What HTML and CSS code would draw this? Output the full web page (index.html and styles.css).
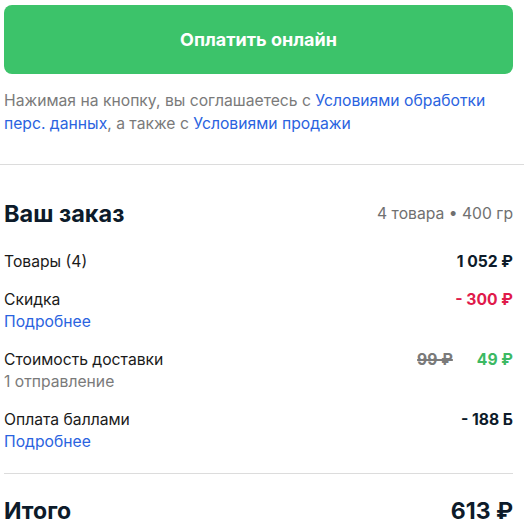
FILE: index.html
```html
<!DOCTYPE html>
<html lang="ru">
<head>
<meta charset="utf-8">
<link rel="stylesheet" href="styles.css">
</head>
<body>
<div class="pay">
  <button class="pay-btn">Оплатить онлайн</button>
  <p class="note">Нажимая на кнопку, вы соглашаетесь с <a class="link">Условиями обработки перс. данных</a>, а также с <a class="link">Условиями продажи</a></p>
</div>
<div class="divider"></div>
<div class="order">
  <div class="order-head">
    <h2 class="title">Ваш заказ</h2>
    <span class="meta">4 товара • 400 гр</span>
  </div>
  <div class="rows">
    <div class="row">
      <div class="label"><div>Товары (4)</div></div>
      <div class="value">1 052 ₽</div>
    </div>
    <div class="row">
      <div class="label"><div>Скидка</div><a class="link">Подробнее</a></div>
      <div class="value red">- 300 ₽</div>
    </div>
    <div class="row">
      <div class="label"><div>Стоимость доставки</div><div class="sub">1 отправление</div></div>
      <div class="value"><s class="old">99 ₽</s><span class="green">49 ₽</span></div>
    </div>
    <div class="row">
      <div class="label"><div>Оплата баллами</div><a class="link">Подробнее</a></div>
      <div class="value">- 188 Б</div>
    </div>
  </div>
  <div class="line"></div>
  <div class="total">
    <span>Итого</span>
    <span>613 ₽</span>
  </div>
</div>
</body>
</html>
```
FILE: styles.css
```css
html, body {
  margin: 0;
  padding: 0;
  background: #fff;
}
body {
  font-family: Inter, "Noto Sans", sans-serif;
  color: #101c2c;
  width: 524px;
  overflow: hidden;
}
.pay {
  padding: 5px 11px 0 4px;
}
.pay-btn {
  display: block;
  width: 100%;
  height: 69px;
  border: 0;
  border-radius: 8px;
  background: #3cc36a;
  color: #fff;
  font-family: inherit;
  font-size: 18px;
  font-weight: 700;
}
.note {
  margin: 15px 0 0;
  font-size: 15.7px;
  line-height: 23px;
  color: #7a7a7a;
}
.link {
  color: #2a63e0;
  text-decoration: none;
}
.divider {
  height: 1px;
  background: #dcdcdc;
  margin-top: 29px;
}
.order {
  padding: 0 11px 0 4px;
}
.order-head {
  display: flex;
  justify-content: space-between;
  align-items: center;
  margin-top: 34px;
  height: 28px;
}
.title {
  margin: 0;
  font-size: 23.5px;
  font-weight: 700;
  color: #0d1b2a;
}
.meta {
  font-size: 15.7px;
  color: #707070;
}
.rows {
  display: flex;
  flex-direction: column;
  gap: 16px;
  margin-top: 24px;
}
.row {
  display: flex;
  justify-content: space-between;
  align-items: flex-start;
  font-size: 15.7px;
  line-height: 22px;
}
.label {
  display: flex;
  flex-direction: column;
  color: #1a1a1a;
}
.sub {
  color: #7a7a7a;
}
.value {
  font-weight: 700;
  color: #0d1b2a;
  display: flex;
  gap: 24px;
}
.red {
  color: #e01a4b;
}
.green {
  color: #3cb963;
}
.old {
  color: #7a7a7a;
  text-decoration-thickness: 1.5px;
}
.line {
  height: 1px;
  background: #dcdcdc;
  margin-top: 20px;
}
.total {
  display: flex;
  justify-content: space-between;
  align-items: center;
  margin-top: 23px;
  height: 28px;
  font-size: 23px;
  font-weight: 700;
  color: #0d1b2a;
}
```
